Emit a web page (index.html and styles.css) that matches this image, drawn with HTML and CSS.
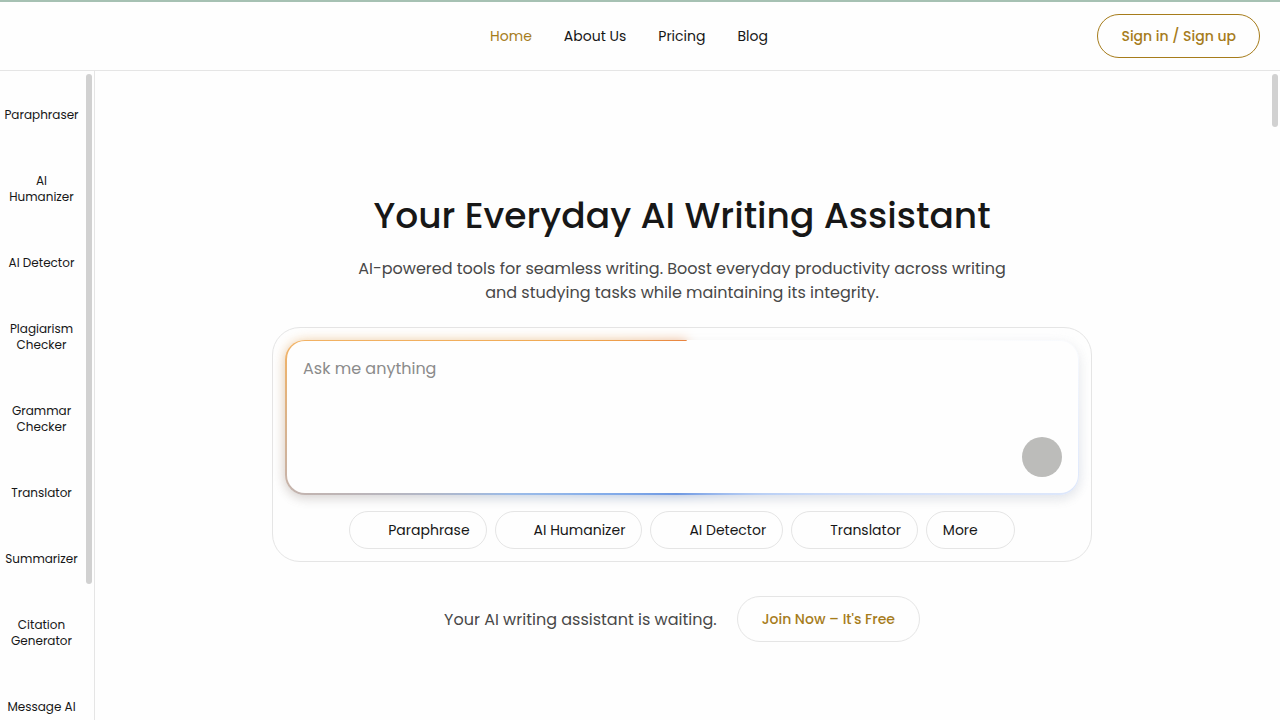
FILE: index.html
```html
<!DOCTYPE html>
<html lang="en">
<head>
    <meta charset="UTF-8">
    <meta name="viewport" content="width=device-width, initial-scale=1.0">
    <title>Your Everyday AI Writing Assistant</title>
    <link rel="stylesheet" href="styles.css">
</head>
<body>

<header class="header">
    <nav class="nav">
        <a href="#" class="active">Home</a>
        <a href="#">About Us</a>
        <a href="#">Pricing</a>
        <a href="#">Blog</a>
    </nav>
    <button class="signin">Sign in / Sign up</button>
</header>

<div class="layout">
    <!-- Tools -->
    <aside class="sidebar">
        <nav class="tools">
            <a href="#">Paraphraser</a>
            <a href="#">AI Humanizer</a>
            <a href="#">AI Detector</a>
            <a href="#">Plagiarism Checker</a>
            <a href="#">Grammar Checker</a>
            <a href="#">Translator</a>
            <a href="#">Summarizer</a>
            <a href="#">Citation Generator</a>
            <a href="#">Message AI</a>
        </nav>
        <div class="track"><div class="thumb tools-thumb"></div></div>
    </aside>

    <main class="main">
        <section class="hero">
            <h1>Your Everyday AI Writing Assistant</h1>
            <p class="intro">AI-powered tools for seamless writing. Boost everyday productivity across writing and studying tasks while maintaining its integrity.</p>

            <div class="card">
                <div class="prompt">
                    <textarea class="ask" aria-label="Ask me anything" placeholder="Ask me anything"></textarea>
                    <button class="send" aria-label="Send"></button>
                </div>
                <div class="chips">
                    <button class="chip">Paraphrase</button>
                    <button class="chip">AI Humanizer</button>
                    <button class="chip">AI Detector</button>
                    <button class="chip">Translator</button>
                    <button class="chip more">More</button>
                </div>
            </div>

            <div class="join">
                <p>Your AI writing assistant is waiting.</p>
                <button class="join-btn">Join Now – It's Free</button>
            </div>
        </section>
    </main>
    <div class="track"><div class="thumb page-thumb"></div></div>
</div>

</body>
</html>
```
FILE: styles.css
```css
* {
    margin: 0;
    padding: 0;
    box-sizing: border-box;
}
body {
    display: flex;
    flex-direction: column;
    height: 100vh;
    overflow: hidden;
    background: #fefefe;
    color: #171717;
    font-family: Poppins, Inter, sans-serif;
}
a {
    color: inherit;
    text-decoration: none;
}
button, textarea {
    font-family: inherit;
    color: inherit;
}
button {
    background: transparent;
    cursor: pointer;
}
.header {
    display: grid;
    grid-template-columns: 1fr auto 1fr;
    align-items: center;
    padding: 12px 20px;
    border-top: 2px solid #a6c1b3;
    border-bottom: 1px solid #e5e5e5;
}
.nav {
    grid-column: 2;
    display: flex;
    gap: 32px;
    margin-right: 22px;
    font-size: 14px;
}
.nav .active {
    color: #a67c1b;
}
.signin {
    justify-self: end;
    height: 44px;
    padding: 0 23px;
    border: 1px solid #a67c1b;
    border-radius: 22px;
    color: #a67c1b;
    font-size: 14px;
    font-weight: 500;
}
.layout {
    display: flex;
    flex: 1;
    min-height: 0;
}
/* Thin grey scrollbars */
.track {
    width: 11px;
    flex-shrink: 0;
    padding: 3px 2px 0 3px;
}
.thumb {
    border-radius: 3px;
    background: #d1d1d1;
}
.tools-thumb {
    height: 79%;
}
.page-thumb {
    height: 53px;
}
.sidebar {
    display: flex;
    width: 95px;
    flex-shrink: 0;
    border-right: 1px solid #e5e5e5;
}
.tools {
    flex: 1;
    overflow: hidden;
    font-size: 12px;
    line-height: 16px;
    text-align: center;
}
.tools a {
    display: block;
    padding: 36px 4px 14px;
}
.main {
    flex: 1;
    overflow: hidden;
}
.hero {
    display: flex;
    flex-direction: column;
    align-items: center;
    padding: 117px 20px 0;
}
h1 {
    font-size: 36px;
    font-weight: 500;
    line-height: 56px;
}
.intro {
    max-width: 660px;
    margin-top: 13px;
    color: #484848;
    font-size: 16px;
    line-height: 24px;
    text-align: center;
}
.card {
    width: 100%;
    max-width: 820px;
    margin-top: 22px;
    padding: 12px;
    border: 1px solid #e5e5e5;
    border-radius: 28px;
}
/* Input with the coloured ring and its glow */
.prompt {
    position: relative;
    isolation: isolate;
    height: 155px;
    padding: 1px 1px 2px 2px;
    border-radius: 20px;
    box-shadow: 0 4px 12px rgba(0, 0, 0, 0.1);
}
.prompt::before, .prompt::after {
    content: "";
    position: absolute;
    inset: 0;
    z-index: -1;
    border-radius: 20px;
    background: conic-gradient(from 4deg, #fefefe 0deg, #fefefe 70deg, #d3e0fa 105deg, #b9cff5 130deg, #6e98e2 180deg, #86aeea 225deg, #9bbbe8 242deg, #c9b3a6 257deg, #f2b264 277deg, #f0a850 300deg, #e88440 359deg, #fefefe 360deg);
}
.prompt::before {
    filter: blur(6px);
    opacity: 0.5;
}
.ask {
    display: block;
    width: 100%;
    height: 100%;
    padding: 16px;
    border: none;
    border-radius: 18px;
    outline: none;
    resize: none;
    overflow: hidden;
    background: #fefefe;
    font-size: 16px;
    line-height: 24px;
}
.ask::placeholder {
    color: #8b8b8b;
}
.send {
    position: absolute;
    right: 17px;
    bottom: 18px;
    width: 40px;
    height: 40px;
    border: none;
    border-radius: 50%;
    background: #bcbcba;
}
.chips {
    display: flex;
    justify-content: center;
    gap: 8px;
    margin-top: 16px;
}
.chip {
    height: 38px;
    padding: 0 16px 0 38px;
    border: 1px solid #e5e5e5;
    border-radius: 19px;
    font-size: 14px;
}
.more {
    padding: 0 36px 0 16px;
}
.join {
    display: flex;
    align-items: center;
    gap: 20px;
    margin-top: 34px;
    color: #484848;
    font-size: 16px;
}
.join-btn {
    height: 46px;
    padding: 0 24px;
    border: 1px solid #e5e5e5;
    border-radius: 23px;
    color: #a67c1b;
    font-size: 14px;
    font-weight: 500;
}
```
